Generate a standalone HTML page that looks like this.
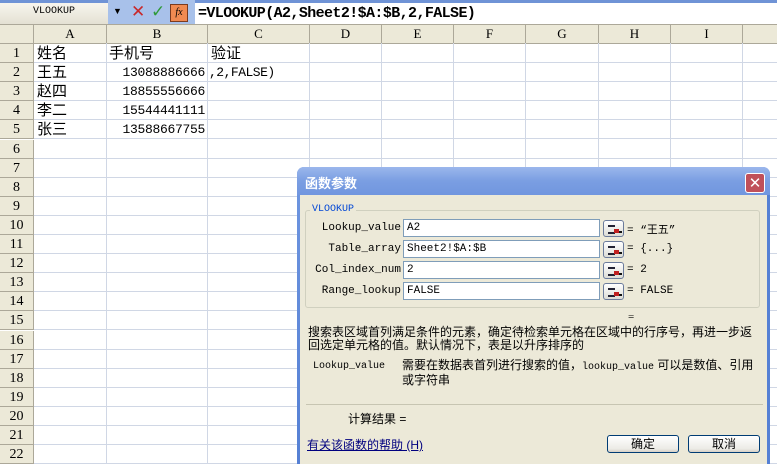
<!DOCTYPE html><html><head><meta charset="utf-8"><style>
*{margin:0;padding:0;box-sizing:border-box}
body{width:777px;height:464px;overflow:hidden;background:#fff;position:relative;font-family:"Liberation Serif","Noto Serif CJK SC",serif;font-size:13px}
.a{position:absolute}
.cjk{font-family:"Liberation Sans","Noto Sans CJK SC",sans-serif}
.hd{background:#ece9d8;border-right:1px solid #aca899;text-align:center;color:#000;font-size:13px}
.vl{position:absolute;top:43px;height:421px;width:1px;background:#d0d7e5}
.hl{position:absolute;left:0;width:777px;height:1px;background:#d0d7e5}
.rn{position:absolute;left:0;width:34px;height:19px;background:#ece9d8;border-bottom:1px solid #aca899;border-right:1px solid #aca899;text-align:center;line-height:19px;font-size:14px}
.inp{position:absolute;left:403px;width:197px;height:18px;background:#fff;border:1px solid #7f9db9;font-size:11px;line-height:16px;padding-left:3px;font-family:"Liberation Mono","Noto Sans CJK SC",monospace}
.btn{position:absolute;left:603px;width:21px;height:17px;border:1px solid #6b7b9b;border-radius:3px;background:linear-gradient(#fff,#dcdcd6)}
.btn::before{content:"";position:absolute;left:4px;top:4px;width:7px;height:5px;border-top:2px solid #223;border-bottom:2px solid #223}
.btn::after{content:"";position:absolute;left:10px;top:8px;width:5px;height:4px;background:#c02020;box-shadow:4px 1px 0 -1px #111}
.lb{position:absolute;width:96px;left:305px;text-align:right;font-size:11px;font-family:"Liberation Mono",monospace}
.eq{position:absolute;left:627px;font-size:11px;font-family:"Liberation Mono","Noto Sans CJK SC",monospace}
.pb{position:absolute;top:435px;height:18px;width:72px;border:1px solid #003c74;border-radius:3px;background:linear-gradient(#fff,#ecebe6 80%,#d6d0c5);text-align:center;font-size:12px;line-height:16px}
</style></head><body>
<div class="a" style="left:0;top:0;width:777px;height:3px;background:#6f93d6"></div>
<div class="a" style="left:0;top:3px;width:108px;height:21px;background:linear-gradient(#f7f5ee,#e4e1d3)"></div>
<div class="a" style="left:33px;top:6px;font-size:10px;font-family:'Liberation Mono',monospace">VLOOKUP</div>
<div class="a" style="left:108px;top:0;width:87px;height:24px;background:#a8c1ea"></div>
<div class="a" style="left:113px;top:6px;font-size:9px">▼</div>
<div class="a" style="left:131px;top:2px;font-size:17px;color:#c8282a;font-family:'DejaVu Sans'">✕</div>
<div class="a" style="left:151px;top:2px;font-size:17px;color:#2f9a3a;font-family:'DejaVu Sans'">✓</div>
<div class="a" style="left:170px;top:4px;width:18px;height:18px;background:#f08a52;border:1px solid #7a3b20;font-size:10px;font-style:italic;text-align:center;line-height:16px">fx</div>
<div class="a" style="left:195px;top:3px;width:582px;height:21px;background:#fff"></div>
<div class="a" style="left:198px;top:5px;font-size:15px;font-family:'Liberation Mono',monospace;font-weight:bold;letter-spacing:-0.6px">=VLOOKUP(A2,Sheet2!$A:$B,2,FALSE)</div>
<div class="a" style="left:0;top:24px;width:777px;height:20px;background:#ece9d8;border-top:1px solid #aca899;border-bottom:1px solid #aca899"></div>
<div class="a hd" style="left:0;top:25px;width:34px;height:18px"></div>
<div class="a hd" style="left:34px;top:25px;width:73px;height:18px;line-height:18px">A</div>
<div class="a hd" style="left:107px;top:25px;width:101px;height:18px;line-height:18px">B</div>
<div class="a hd" style="left:208px;top:25px;width:102px;height:18px;line-height:18px">C</div>
<div class="a hd" style="left:310px;top:25px;width:72px;height:18px;line-height:18px">D</div>
<div class="a hd" style="left:382px;top:25px;width:72px;height:18px;line-height:18px">E</div>
<div class="a hd" style="left:454px;top:25px;width:72px;height:18px;line-height:18px">F</div>
<div class="a hd" style="left:526px;top:25px;width:73px;height:18px;line-height:18px">G</div>
<div class="a hd" style="left:599px;top:25px;width:72px;height:18px;line-height:18px">H</div>
<div class="a hd" style="left:671px;top:25px;width:72px;height:18px;line-height:18px">I</div>
<div class="vl" style="left:106px"></div><div class="vl" style="left:207px"></div><div class="vl" style="left:309px"></div><div class="vl" style="left:381px"></div><div class="vl" style="left:453px"></div><div class="vl" style="left:525px"></div><div class="vl" style="left:598px"></div><div class="vl" style="left:670px"></div><div class="vl" style="left:742px"></div>
<div id="rows"></div>
<script>
var h='';for(var i=1;i<=22;i++){var t=Math.round(44+(i-1)*19.1);h+='<div class="hl" style="top:'+(t+18)+'px"></div><div class="rn" style="top:'+t+'px">'+i+'</div>';}
document.getElementById('rows').innerHTML=h;
</script>
<div class="a cjk" style="left:37px;top:44px;font-size:15px;line-height:19.1px">姓名<br>王五<br>赵四<br>李二<br>张三</div>
<div class="a cjk" style="left:109px;top:44px;font-size:15px;line-height:19px">手机号</div>
<div class="a cjk" style="left:211px;top:44px;font-size:15px;line-height:19px">验证</div>
<div class="a" style="left:107px;top:63px;width:98px;text-align:right;font-size:13px;line-height:19.1px;font-family:'Liberation Mono',monospace;letter-spacing:-0.3px">13088886666<br>18855556666<br>15544441111<br>13588667755</div>
<div class="a" style="left:209px;top:63px;font-size:13px;line-height:19px;font-family:'Liberation Mono',monospace;letter-spacing:-0.5px">,2,FALSE)</div>
<div class="a" style="left:297px;top:167px;width:473px;height:297px;border-radius:7px 7px 0 0;background:linear-gradient(#6f96e0,#5580d4)"></div>
<div class="a" style="left:297px;top:167px;width:473px;height:28px;border-radius:7px 7px 0 0;background:linear-gradient(#9bb7ec,#7a9ee2 50%,#7196df)"></div>
<div class="a cjk" style="left:305px;top:173px;color:#fff;font-size:13px;font-weight:bold">函数参数</div>
<div class="a" style="left:745px;top:173px;width:20px;height:20px;border:1px solid #fff;border-radius:3px;background:#c0505a;color:#fff;text-align:center;font-size:15px;line-height:18px;font-family:'DejaVu Sans';font-weight:bold">✕</div>
<div class="a" style="left:300px;top:195px;width:467px;height:269px;background:#ece9d8"></div>
<div class="a" style="left:305px;top:210px;width:455px;height:98px;border:1px solid #d0d0bf;border-radius:3px"></div>
<div class="a" style="left:310px;top:204px;background:#ece9d8;color:#0046d5;font-size:10px;padding:0 2px;font-family:'Liberation Mono',monospace">VLOOKUP</div>
<div class="lb" style="top:222px">Lookup_value</div><div class="inp" style="top:219px">A2</div><div class="btn" style="top:220px"></div><div class="eq cjk" style="top:221px">= “王五”</div>
<div class="lb" style="top:243px">Table_array</div><div class="inp" style="top:240px">Sheet2!$A:$B</div><div class="btn" style="top:241px"></div><div class="eq" style="top:243px">= {...}</div>
<div class="lb" style="top:264px">Col_index_num</div><div class="inp" style="top:261px">2</div><div class="btn" style="top:262px"></div><div class="eq" style="top:264px">= 2</div>
<div class="lb" style="top:285px">Range_lookup</div><div class="inp" style="top:282px">FALSE</div><div class="btn" style="top:283px"></div><div class="eq" style="top:285px">= FALSE</div>
<div class="a" style="left:628px;top:311px;font-size:11px">=</div>
<div class="a cjk" style="left:308px;top:326px;font-size:12px;line-height:13px;width:460px">搜索表区域首列满足条件的元素，确定待检索单元格在区域中的行序号，再进一步返<br>回选定单元格的值。默认情况下，表是以升序排序的</div>
<div class="a" style="left:313px;top:361px;font-size:10px;font-family:'Liberation Mono',monospace">Lookup_value</div>
<div class="a cjk" style="left:402px;top:359px;font-size:12px;line-height:13px;width:366px">需要在数据表首列进行搜索的值，<span style="font-family:'Liberation Mono';font-size:10px">lookup_value</span> 可以是数值、引用<br>或字符串</div>
<div class="a" style="left:306px;top:404px;width:457px;height:1px;background:#c7c5b2"></div>
<div class="a cjk" style="left:348px;top:410px;font-size:12px">计算结果 =</div>
<div class="a cjk" style="left:307px;top:436px;font-size:12px;color:#00007f;text-decoration:underline">有关该函数的帮助 (H)</div>
<div class="pb cjk" style="left:607px">确定</div>
<div class="pb cjk" style="left:688px">取消</div>
<div class="a" style="left:767px;top:195px;width:3px;height:269px;background:#5580d4"></div>
</body></html>
